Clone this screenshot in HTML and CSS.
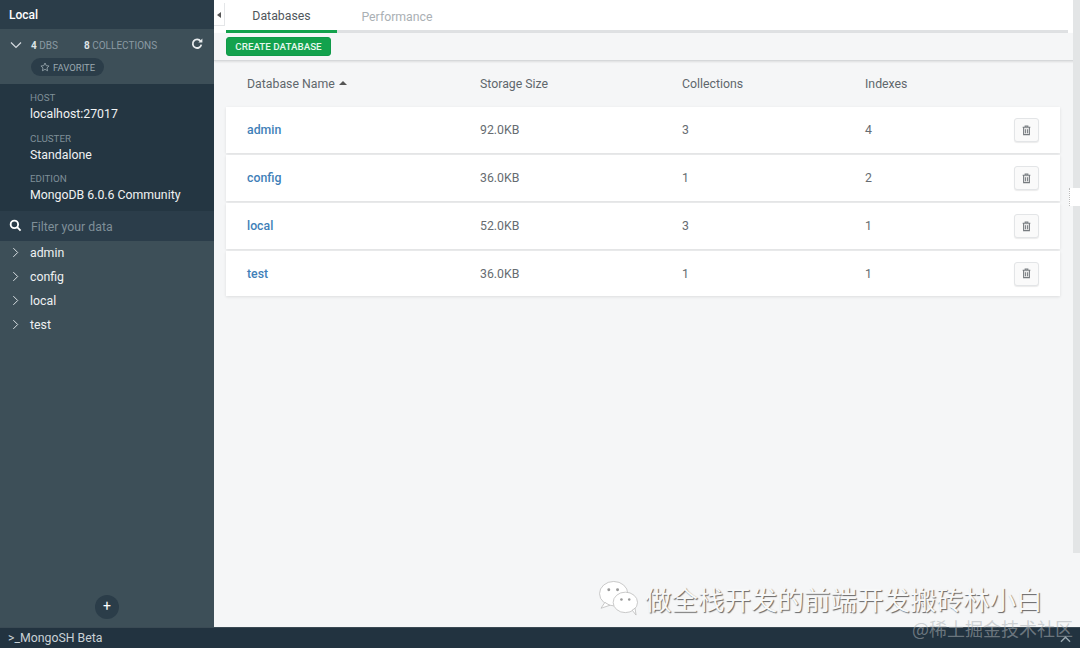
FILE: index.html
```html
<!DOCTYPE html>
<html lang="en">
<head>
  <meta charset="UTF-8" />
  <title>MongoDB Compass - Local</title>
  <link rel="stylesheet" href="styles.css">
</head>
<body>
  <div class="app">
    <aside class="sidebar">
      <div class="conn-title">Local</div>
      <div class="stats">
        <div class="stats-row">
          <svg class="chev-down" viewBox="0 0 12 8"><path d="M1 1.500l5 5 5-5" /></svg>
          <span class="stat"><b>4</b> DBS</span>
          <span class="stat stat-coll"><b>8</b> COLLECTIONS</span>
          <svg class="refresh" viewBox="0 0 12 12"><path d="M9.600 3.200A4.300 4.300 0 1 0 10.300 6.600" /><path class="fill" d="M7.400 4.400h4V.5z" /></svg>
        </div>
        <span class="fav">
          <svg viewBox="0 0 12 12"><path d="M6 1.200l1.500 3.200 3.400.4-2.500 2.300.7 3.400L6 8.800l-3.100 1.700.7-3.400L1.100 4.800l3.400-.4z" /></svg>
          FAVORITE
        </span>
      </div>
      <div class="instance">
        <div class="info"><div class="info-label">HOST</div><div class="info-value">localhost:27017</div></div>
        <div class="info"><div class="info-label">CLUSTER</div><div class="info-value">Standalone</div></div>
        <div class="info"><div class="info-label">EDITION</div><div class="info-value">MongoDB 6.0.6 Community</div></div>
      </div>
      <div class="filter">
        <svg viewBox="0 0 14 14"><circle cx="5.800" cy="5.800" r="4" /><path d="M8.800 8.800l3.700 3.700" /></svg>
        <span>Filter your data</span>
      </div>
      <ul class="db-tree">
        <li><svg viewBox="0 0 8 12"><path d="M1.500 1l5 5-5 5" /></svg>admin</li>
        <li><svg viewBox="0 0 8 12"><path d="M1.500 1l5 5-5 5" /></svg>config</li>
        <li><svg viewBox="0 0 8 12"><path d="M1.500 1l5 5-5 5" /></svg>local</li>
        <li><svg viewBox="0 0 8 12"><path d="M1.500 1l5 5-5 5" /></svg>test</li>
      </ul>
      <div class="add-row"><span class="add-btn">+</span></div>
    </aside>

    <main class="main">
      <span class="collapse"></span>
      <div class="tabs">
        <div class="tab-strip">
          <div class="tab active">Databases</div>
          <div class="tab tab-perf">Performance</div>
        </div>
      </div>
      <div class="toolbar"><button class="btn-create">CREATE DATABASE</button></div>
      <div class="content">
        <div class="cols head">
          <div>Database Name <span class="sort"></span></div>
          <div>Storage Size</div>
          <div>Collections</div>
          <div>Indexes</div>
          <div></div>
        </div>
        <div class="cols row">
          <div class="name">admin</div><div>92.0KB</div><div>3</div><div>4</div>
          <div class="del"><button class="trash"><svg viewBox="0 0 12 12"><path d="M4.500 2V1h3v1M1.800 2.500h8.400M2.800 3v7.500h6.400V3M4.800 4.500v4.500M7.200 4.500v4.500" /></svg></button></div>
        </div>
        <div class="cols row">
          <div class="name">config</div><div>36.0KB</div><div>1</div><div>2</div>
          <div class="del"><button class="trash"><svg viewBox="0 0 12 12"><path d="M4.500 2V1h3v1M1.800 2.500h8.400M2.800 3v7.500h6.400V3M4.800 4.500v4.500M7.200 4.500v4.500" /></svg></button></div>
        </div>
        <div class="cols row">
          <div class="name">local</div><div>52.0KB</div><div>3</div><div>1</div>
          <div class="del"><button class="trash"><svg viewBox="0 0 12 12"><path d="M4.500 2V1h3v1M1.800 2.500h8.400M2.800 3v7.500h6.400V3M4.800 4.500v4.500M7.200 4.500v4.500" /></svg></button></div>
        </div>
        <div class="cols row">
          <div class="name">test</div><div>36.0KB</div><div>1</div><div>1</div>
          <div class="del"><button class="trash"><svg viewBox="0 0 12 12"><path d="M4.500 2V1h3v1M1.800 2.500h8.400M2.800 3v7.500h6.400V3M4.800 4.500v4.500M7.200 4.500v4.500" /></svg></button></div>
        </div>
      </div>
      <span class="scrollbar"></span>
      <span class="side-handle"></span>
    </main>
  </div>

  <footer class="shell">&gt;_MongoSH Beta
    <svg class="shell-up" viewBox="0 0 12 8"><path d="M1 7l5-5 5 5" /></svg>
  </footer>

  <!-- watermarks sit over the screenshot -->
  <div class="wm-main">
    <svg viewBox="0 0 44 38">
      <ellipse class="bubble" cx="16" cy="14" rx="14.500" ry="12.500" />
      <path class="bubble" d="M7 23l-4 6 9-3z" />
      <ellipse class="bubble" cx="28" cy="23" rx="12.500" ry="10.500" />
      <path class="bubble" d="M35 31l4 5-1-7z" />
      <circle class="dot" cx="11" cy="10" r="1.500" /><circle class="dot" cx="20" cy="10" r="1.500" />
      <circle class="dot" cx="24" cy="20" r="1.300" /><circle class="dot" cx="32" cy="20" r="1.300" />
    </svg>
    <span>做全栈开发的前端开发搬砖林小白</span>
  </div>
  <div class="wm-small">@稀土掘金技术社区</div>
</body>
</html>
```

FILE: styles.css
```css
:root {
  --side-dark: #243642;
  --side-mid: #3d4f58;
  --green: #13a24d;
  --link: #3f7fb8;
  --text: #666c71;
  --bg: #f5f6f7;
}
* { box-sizing: border-box; }
html, body { height: 100%; }
body {
  margin: 0;
  display: flex;
  flex-direction: column;
  overflow: hidden;
  font-family: Roboto, "Noto Sans CJK SC", sans-serif;
  font-size: 12.500px;
  background: var(--bg);
  color: var(--text);
}
.app {
  flex: 1;
  display: flex;
  min-height: 0;
}

/* sidebar */
.sidebar {
  width: 214px;
  display: flex;
  flex-direction: column;
  background: var(--side-mid);
  color: #fff;
}
.conn-title {
  height: 29px;
  padding: 1px 9px 0;
  display: flex;
  align-items: center;
  font-weight: 500;
  font-size: 12px;
  background: #2b3d49;
}
.stats {
  height: 55px;
  padding: 9px 0 0 31px;
  background: var(--side-mid);
  position: relative;
}
.stats-row {
  display: flex;
  align-items: center;
  height: 14px;
  font-size: 10px;
  color: #8b9aa3;
}
.stat { width: 53px; white-space: nowrap; }
.stat b { color: #dfe4e7; }
.stat-coll { width: auto; }
.chev-down {
  position: absolute;
  left: 10px;
  top: 12px;
  width: 12px;
  height: 8px;
  fill: none;
  stroke: #d5dbdf;
  stroke-width: 1.200;
}
.refresh {
  position: absolute;
  left: 191px;
  top: 9px;
  width: 12px;
  height: 12px;
  fill: none;
  stroke: #e8ecee;
  stroke-width: 1.800;
}
.refresh .fill { fill: #e8ecee; stroke: none; }
.fav {
  display: inline-flex;
  align-items: center;
  gap: 3px;
  height: 18px;
  margin-top: 6px;
  padding: 0 9px;
  border-radius: 9px;
  background: #2b3d49;
  color: #9aa8b0;
  font-size: 9.500px;
}
.fav svg {
  width: 10px;
  height: 10px;
  fill: none;
  stroke: #9aa8b0;
}
.instance {
  height: 127px;
  padding: 6px 0 0 30px;
  background: var(--side-dark);
}
.info { height: 40.500px; }
.info-label {
  font-size: 9.800px;
  line-height: 12px;
  color: #7f8f98;
  padding-top: 2px;
  height: 16px;
}
.info-value {
  font-size: 12.300px;
  line-height: 17px;
  color: #f0f2f3;
}
.filter {
  height: 30px;
  padding: 1px 0 0 9px;
  display: flex;
  align-items: center;
  gap: 9px;
  background: #2b3d4a;
  color: #7f8f98;
  font-size: 12.300px;
}
.filter svg {
  width: 13px;
  height: 13px;
  fill: none;
  stroke: #fff;
  stroke-width: 2;
  flex: none;
  margin-top: -3px;
}
.db-tree {
  list-style: none;
  margin: 0;
  padding: 0;
  flex: 1;
}
.db-tree li {
  height: 23.900px;
  display: flex;
  align-items: center;
  padding-left: 12px;
  gap: 11px;
  font-size: 12.300px;
  color: #eef1f2;
}
.db-tree svg {
  width: 7px;
  height: 11px;
  fill: none;
  stroke: #e0e5e8;
  stroke-width: 1.100;
}
.add-row {
  display: flex;
  justify-content: center;
  padding-bottom: 8px;
}
.add-btn {
  width: 24px;
  height: 24px;
  border-radius: 50%;
  background: #2b3d49;
  color: #fff;
  font-size: 14px;
  line-height: 22px;
  text-align: center;
}

/* main area */
.main {
  flex: 1;
  min-width: 0;
  display: flex;
  flex-direction: column;
  position: relative;
  font-size: 12.300px;
}
.collapse {
  position: absolute;
  left: 0;
  top: 3px;
  width: 11px;
  height: 23px;
  background: #fff;
  border-right: 1px solid #e4e6e8;
  border-bottom: 1px solid #e4e6e8;
}
.collapse::after {
  content: "";
  position: absolute;
  left: 3px;
  top: 9px;
  border: 3px solid transparent;
  border-left: 0;
  border-right: 4px solid #555;
}
.tabs {
  height: 33px;
  padding: 0 12px;
  background: #fff;
}
.tab-strip {
  height: 33px;
  display: flex;
  border-bottom: 3px solid #dfe1e3;
}
.tab {
  width: 111px;
  height: 33px;
  display: flex;
  align-items: center;
  justify-content: center;
  color: #aab0b4;
}
.tab.active {
  color: #4f565b;
  padding-top: 1px;
  border-bottom: 3px solid var(--green);
}
.tab-perf { width: 120px; }
.toolbar {
  height: 28px;
  padding: 4px 12px 0;
  background: var(--bg);
  border-bottom: 1px solid #d6d8da;
  box-shadow: 0 1px 2px rgba(0,0,0,0.1);
}
.btn-create {
  display: block;
  width: 105px;
  height: 19px;
  padding: 0;
  border: 1px solid #0f9a49;
  border-radius: 3px;
  background: var(--green);
  color: #e6f7ed;
  font: 500 9.800px Roboto, sans-serif;
}
.content {
  flex: 1;
  padding: 0 20px 0 12px;
}
.cols {
  display: grid;
  grid-template-columns: 233px 202px 183px 1fr 46px;
  padding-left: 21px;
  align-items: center;
}
.head {
  height: 46px;
  color: #5f676c;
}
.sort {
  display: inline-block;
  margin-left: 1px;
  vertical-align: 3px;
  border: 4px solid transparent;
  border-top: 0;
  border-bottom: 4px solid #555;
}
.row {
  height: 46px;
  margin-bottom: 2px;
  background: #fff;
  box-shadow: 0 1px 3px rgba(0,0,0,0.1);
}
.row:last-child { height: 45px; }
.name {
  color: var(--link);
  font-weight: 500;
}
.trash {
  display: flex;
  align-items: center;
  justify-content: center;
  width: 25px;
  height: 24px;
  padding: 0;
  background: #fafafa;
  border: 1px solid #e3e5e7;
  border-radius: 3px;
  box-shadow: 0 1px 1px rgba(0,0,0,0.08);
}
.trash svg {
  width: 11px;
  height: 11px;
  fill: #e8e8e8;
  stroke: #777c80;
  stroke-width: 1.100;
}
.scrollbar {
  position: absolute;
  right: 0;
  top: 0;
  width: 7px;
  height: 553px;
  background: #e3e5e6;
}
.side-handle {
  position: absolute;
  right: 0;
  top: 188px;
  width: 11px;
  height: 18px;
  background: #fff;
  border-left: 1px dotted #bbb;
}

/* bottom bar */
.shell {
  height: 21px;
  flex: none;
  padding: 2px 0 0 8px;
  background: #223340;
  border-top: 1px solid #3a4a54;
  color: #c9d1d6;
  font-size: 12.300px;
  line-height: 17px;
  position: relative;
}
.shell-up {
  position: absolute;
  right: 9px;
  top: 7px;
  width: 11px;
  height: 8px;
  fill: none;
  stroke: #9aa8b0;
  stroke-width: 1.500;
}

/* watermarks */
.wm-main {
  position: absolute;
  left: 598px;
  top: 580px;
  display: flex;
  align-items: center;
  gap: 4px;
  font-family: "Noto Sans CJK SC", sans-serif;
  font-size: 26.500px;
  line-height: 36px;
  color: #f7f8f8;
  text-shadow: 1px 1px 1px #666;
  white-space: nowrap;
}
.wm-main svg { width: 43px; height: 37px; }
.bubble { fill: #fff; stroke: #bbb; stroke-width: 0.800; }
.dot { fill: #999; }
.wm-small {
  position: absolute;
  left: 912px;
  top: 616px;
  font-family: "Noto Sans CJK SC", sans-serif;
  font-size: 18px;
  line-height: 24px;
  color: rgba(170,176,180,0.55);
  white-space: nowrap;
}
```
